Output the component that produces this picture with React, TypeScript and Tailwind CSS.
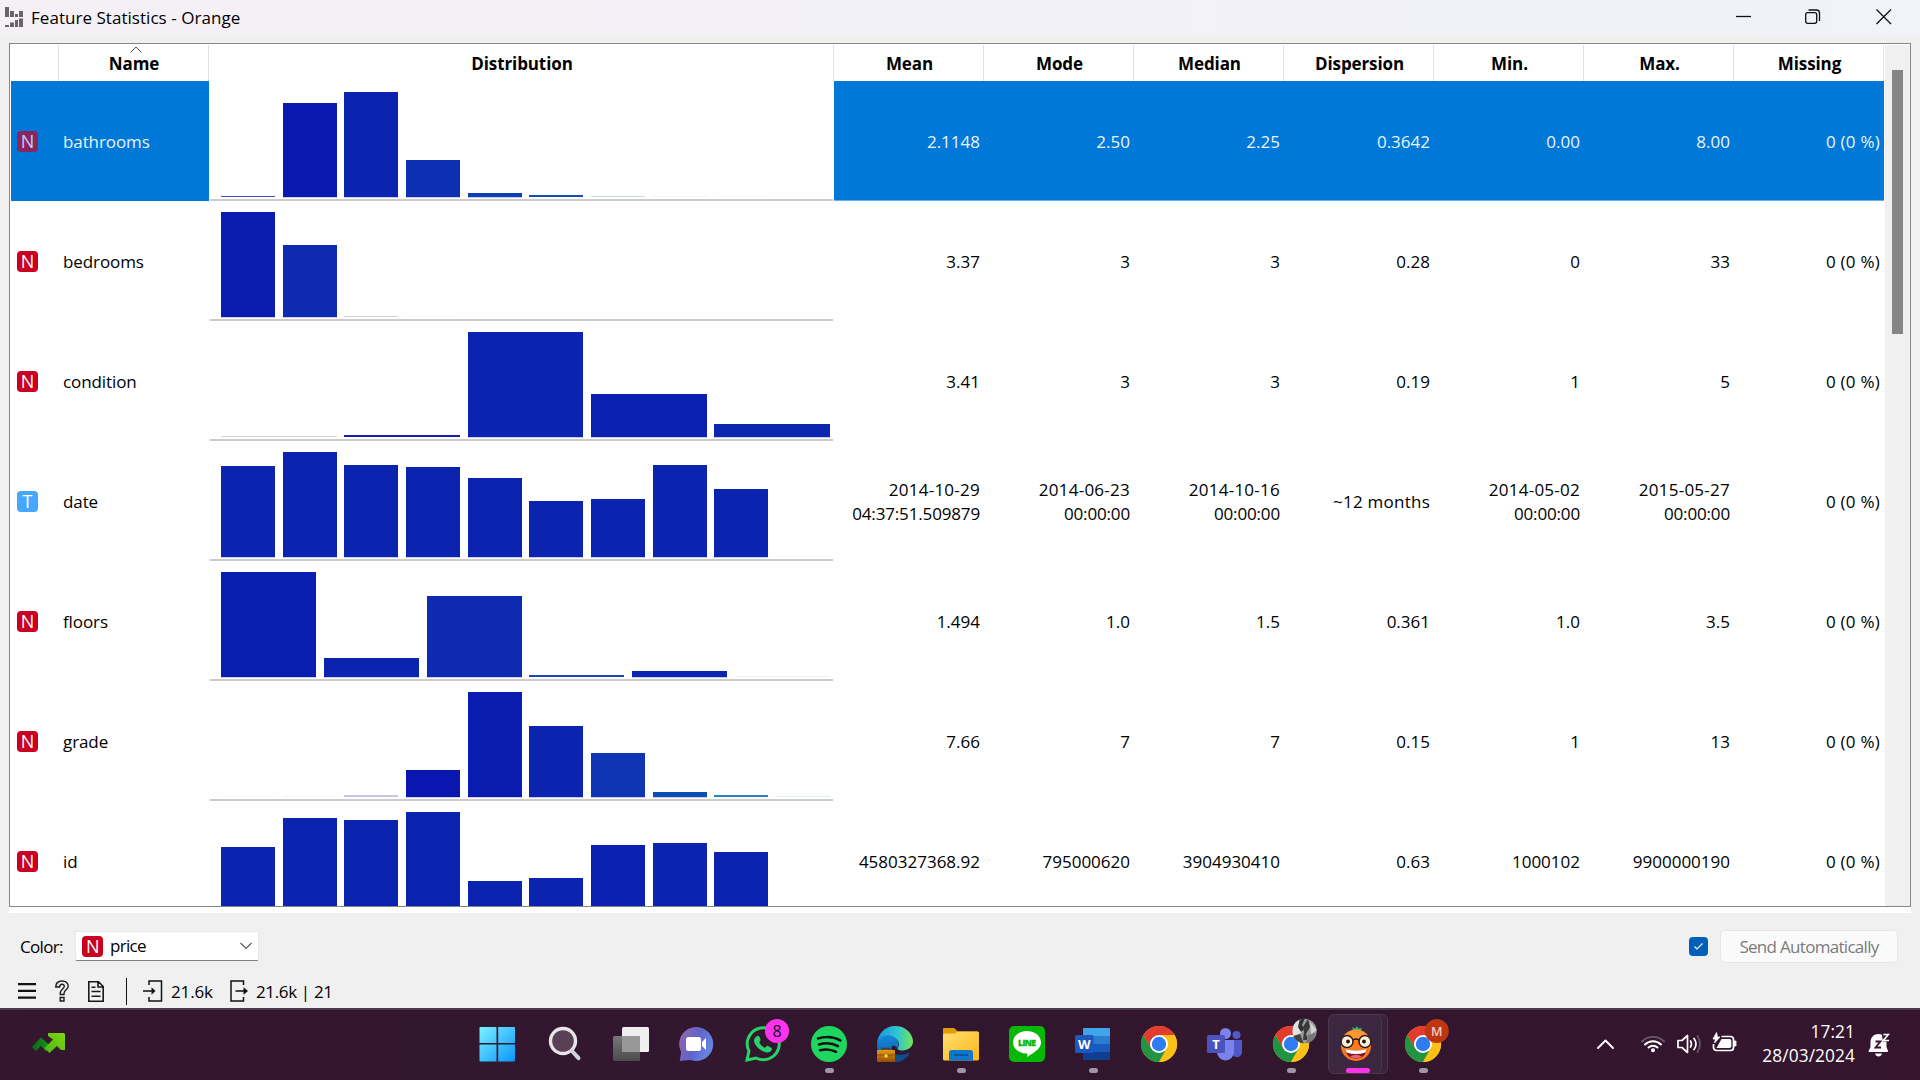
import type { ReactNode } from "react";

type Bar = { h: number; c?: string };
type Row = {
  name: string;
  kind: "N" | "T";
  slots: number;
  bars: Bar[];
  stats: string[];
};

const b = (h: number, c = "#0a24b0"): Bar => ({ h, c });

const rows: Row[] = [
  {
    name: "bathrooms", kind: "N", slots: 10,
    bars: [b(1.5, "#4646cc"), b(94, "#0a1ab0"), b(105), b(37, "#0d30b2"), b(4.5, "#0d40b5"), b(2.5, "#1750b0"), b(1, "#ccdae6"), b(1, "#f2f3f5"), b(1, "#fafafa"), b(0)],
    stats: ["2.1148", "2.50", "2.25", "0.3642", "0.00", "8.00", "0 (0 %)"],
  },
  {
    name: "bedrooms", kind: "N", slots: 10,
    bars: [b(105, "#0a1cb0"), b(72.5, "#0d2ab0"), b(1, "#cfd4ee"), b(1, "#fafafa")],
    stats: ["3.37", "3", "3", "0.28", "0", "33", "0 (0 %)"],
  },
  {
    name: "condition", kind: "N", slots: 5,
    bars: [b(1, "#ced2e8"), b(1.6, "#1520b0"), b(105), b(43, "#0b20b0"), b(13, "#0c26b0")],
    stats: ["3.41", "3", "3", "0.19", "1", "5", "0 (0 %)"],
  },
  {
    name: "date", kind: "T", slots: 10,
    bars: [b(91.5), b(105), b(92.5), b(90.5), b(79), b(56.5), b(58.5), b(92.5), b(68.5), b(1, "#f7f7fb")],
    stats: ["2014-10-29\n04:37:51.509879", "2014-06-23\n00:00:00", "2014-10-16\n00:00:00", "~12 months", "2014-05-02\n00:00:00", "2015-05-27\n00:00:00", "0 (0 %)"],
  },
  {
    name: "floors", kind: "N", slots: 6,
    bars: [b(105, "#0a1eb0"), b(19, "#0b24b0"), b(81.5, "#0d2ab0"), b(2, "#1f45b8"), b(6.5), b(1, "#eeeef8")],
    stats: ["1.494", "1.0", "1.5", "0.361", "1.0", "3.5", "0 (0 %)"],
  },
  {
    name: "grade", kind: "N", slots: 10,
    bars: [b(1, "#fafafa"), b(1, "#f5f5f8"), b(1.6, "#c6c6ea"), b(27, "#0a16b0"), b(105, "#0a1cb0"), b(71.5, "#0b24b0"), b(44.5, "#0f34b4"), b(5.2, "#0c4db6"), b(1.6, "#2e7ec2"), b(1, "#e0f2e4")],
    stats: ["7.66", "7", "7", "0.15", "1", "13", "0 (0 %)"],
  },
  {
    name: "id", kind: "N", slots: 10,
    bars: [b(70.5), b(99.5), b(97), b(105), b(36.5), b(39.5), b(72, "#0b20b0"), b(74), b(65)],
    stats: ["4580327368.92", "795000620", "3904930410", "0.63", "1000102", "9900000190", "0 (0 %)"],
  },
];

const headers = ["Mean", "Mode", "Median", "Dispersion", "Min.", "Max.", "Missing"];

function TypeIcon({ kind, selected }: { kind: "N" | "T"; selected?: boolean }) {
  const color = selected ? "bg-[#8b2560] text-[#b5d5f5]" : kind === "N" ? "bg-[#ca0020] text-white" : "bg-[#46a8fc] text-white";
  return (
    <span className={`flex size-[21px] shrink-0 items-center justify-center rounded-[4px] text-[18px] leading-none ${color}`}>{kind}</span>
  );
}

function Histogram({ row }: { row: Row }) {
  const cols = row.slots === 10 ? "grid-cols-10" : row.slots === 6 ? "grid-cols-6" : "grid-cols-5";
  return (
    <div className={`mr-px ml-px grid h-[120px] w-[623px] shrink-0 ${cols} items-end gap-x-[7.8px] border-b-2 border-[#cccccc] bg-white pr-[3px] pb-[2px] pl-[11px]`}>
      {row.bars.map((bar, i) => (
        <div
          key={i}
          className={bar.h > 4 ? "shadow-[0_1px_0_#c9cdec]" : ""}
          style={{ height: bar.h > 4 ? bar.h - 0.4 : bar.h, backgroundColor: bar.c }}
        />
      ))}
    </div>
  );
}

function statSpacing(s: string) {
  if (s.includes("(") || s.includes("~")) return "tracking-[0.25px]";
  if (s.includes("-")) return "";
  return "";
}

function DataRow({ row, selected }: { row: Row; selected: boolean }) {
  const sel = selected ? "bg-[#0078d7] text-[#e8f3fc]" : "bg-white";
  return (
    <div className="flex h-[120px] shrink-0">
      <div className={`flex w-[198px] shrink-0 items-center pl-[6px] ${sel}`}>
        <TypeIcon kind={row.kind} selected={selected} />
        <span className="ml-[25px] pt-[2px] tracking-[-0.1px]">{row.name}</span>
      </div>
      <Histogram row={row} />
      <div className={`flex ${sel} ${selected ? "border-b border-[#66aeea]" : ""}`}>
        {row.stats.map((s, i) => (
          <div key={i} className={`flex w-[150px] flex-col items-end justify-center pt-[2px] pr-1 leading-6 whitespace-nowrap ${statSpacing(s)}`}>
            {s.split("\n").map((line) => (
              <span key={line} className={line.includes("-") ? "tracking-[0.25px]" : line.includes(":") ? "tracking-[-0.15px]" : ""}>{line}</span>
            ))}
          </div>
        ))}
      </div>
    </div>
  );
}

function TitleBar() {
  return (
    <header className="flex h-[34px] shrink-0 items-center bg-linear-to-r from-[#f5f0f6] to-[#f0f3f9]">
      <svg className="ml-[5px] block" width="18" height="20" viewBox="0 0 18 20" fill="#666">
        <path d="M0 0h4v10H0zM5 4h4v6H5zM10 7h3v3h-3zM14 4h4v6h-4zM0 18h4v2H0zM5 15.500h4V20H5zM10 13h3v7h-3zM14 11.500h4V20h-4z" />
      </svg>
      <span className="ml-2 pt-[2px] text-[17px] tracking-[0.04px]">Feature Statistics - Orange</span>
      <div className="flex-1" />
      <svg width="184" height="34" viewBox="0 0 184 34" fill="none" stroke="#111" strokeWidth="1.3">
        <path d="M0 16.500h15" />
        <rect x="69.700" y="12.700" width="11" height="10.600" rx="2" />
        <path d="M72.500 10h8a3 3 0 0 1 3 3v8" />
        <path d="M140.500 9.500l14.500 14.500M155 9.500L140.500 24" />
      </svg>
    </header>
  );
}

function HeaderRow() {
  return (
    <div className="flex h-9 shrink-0 text-center text-[17px] leading-[38px] font-bold tracking-[-0.1px]">
      <div className="w-12 border-r border-[#e2e2e2]" />
      <div className="relative w-[150px] border-r border-[#e2e2e2] pl-px">
        <svg className="absolute top-[1px] left-[71px]" width="12" height="7" viewBox="0 0 12 7" fill="none" stroke="#555" strokeWidth="1"><path d="M.5 6.500L6 1l5.500 5.500" /></svg>
        Name
      </div>
      <div className="w-[625px] border-r border-[#e2e2e2] pl-0.5">Distribution</div>
      {headers.map((h) => (
        <div key={h} className="w-[150px] border-r border-[#e2e2e2] pl-0.5">{h}</div>
      ))}
    </div>
  );
}

function ControlArea() {
  return (
    <section className="h-[95px] shrink-0 text-[17px]">
      <div className="flex h-[66px] items-center pr-[22px] pl-[20px] tracking-[-0.7px]">
        <span className="w-[55px] pt-px">Color:</span>
        <div className="flex h-[30px] w-[184px] items-center rounded-[2px] border border-x-[#e8e8e8] border-t-[#e8e8e8] border-b-[#808080] bg-white pl-[6px]">
          <TypeIcon kind="N" />
          <span className="ml-[7px]">price</span>
          <svg className="mr-[6px] ml-auto" width="12" height="8" viewBox="0 0 12 8" fill="none" stroke="#555" strokeWidth="1.1"><path d="M.5 1L6 6.500 11.500 1" /></svg>
        </div>
        <div className="flex-1" />
        <div className="mr-3 flex size-[19px] items-center justify-center rounded-[4px] bg-[#005fb8]">
          <svg width="9" height="7" viewBox="0 0 9 7" fill="none" stroke="#fff" strokeWidth="1.100"><path d="M.5 3.500L3 6 8.500.5" /></svg>
        </div>
        <div className="flex h-[33px] w-[178px] items-center justify-center rounded-[4px] border border-[#e6e6e6] bg-[#fafafa] pt-px text-[#7b7b7b]">Send Automatically</div>
      </div>
      <div className="flex h-[24px] items-center pl-[18px]">
        <svg width="18" height="16" viewBox="0 0 18 16" fill="#111"><path d="M0 0h18v2.300H0zM0 6.800h18v2.300H0zM0 13.500h18v2.300H0z" /></svg>
        <svg className="ml-[19px]" width="14" height="22" viewBox="0 0 14 22" fill="none" stroke="#1a1a1a" strokeWidth="1.400">
          <path d="M.8 7C.8 3 3.500 1 7 1s6.200 2 6.200 5.200c0 3.200-4.200 4-4.200 7v1.300H5.300V13c0-3.500 4-4.300 4-6.700C9.300 5 8.500 4.200 7 4.200S4.700 5.200 4.700 7zM5.200 17.500H9V21H5.200z" />
        </svg>
        <svg className="ml-[19px]" width="16" height="21" viewBox="0 0 16 21" fill="none" stroke="#1a1a1a" strokeWidth="1.600">
          <path d="M.8.8h9.700l4.700 4.700v14.700H.8zM10 1v5h5M3.500 6.200h4M3.500 10.500h9M3.500 15.200h9" />
        </svg>
        <div className="ml-[22px] h-[27px] w-px bg-[#111]" />
        <svg className="ml-4" width="20" height="22" viewBox="0 0 20 22" fill="none" stroke="#111" strokeWidth="1.500">
          <path d="M6 5V1h12.500v20H6v-4M0 11h10" /><path d="M8.500 7.300L12.500 11l-4 3.700z" fill="#111" stroke="none" />
        </svg>
        <span className="ml-2 w-[59px] pt-px tracking-[-0.15px]">21.6k</span>
        <svg width="19" height="22" viewBox="0 0 19 22" fill="none" stroke="#111" strokeWidth="1.500">
          <path d="M13.500 5V1H1v20h12.500v-4M5.500 11h9" /><path d="M13.500 7.300l4.500 3.700-4.500 3.700z" fill="#111" stroke="none" />
        </svg>
        <span className="ml-[7px] pt-px tracking-[-0.35px]">21.6k | 21</span>
      </div>
    </section>
  );
}

function AppSlot({ children, running, active }: { children: ReactNode; running?: boolean; active?: boolean }) {
  return (
    <div className="relative flex h-full w-[66px] items-center justify-center">
      {active && <div className="absolute top-[6px] left-[30px] h-[60px] w-[34px] rounded-[6px] border border-[#4d394c] bg-[#38223a]" />}
      {active && <div className="absolute top-[6px] left-[4px] h-[60px] w-[54px] rounded-[6px] border border-[#4b374b] bg-[#3d2740]" />}
      <svg className="relative overflow-visible" width="36" height="36" viewBox="0 0 36 36">{children}</svg>
      {running && <div className="absolute bottom-[7px] left-[29px] h-[5px] w-[9px] rounded-full bg-[#a195a3]" />}
      {active && <div className="absolute bottom-[7px] left-[22px] h-[5px] w-6 rounded-full bg-[#ff33ee]" />}
    </div>
  );
}

function Chrome() {
  return (
    <g>
      <circle cx="18" cy="18" r="18" fill="#fbc116" />
      <path d="M2.400 9A18 18 0 0 1 33.600 9L18 9 10.200 22.500z" fill="#e33b2e" />
      <path d="M2.400 9A18 18 0 0 0 18 36L25.800 22.500 10.200 22.500z" fill="#229342" />
      <path d="M33.600 9A18 18 0 0 1 18 36L25.800 22.500 18 9z" fill="#fbc116" />
      <circle cx="18" cy="18" r="9" fill="#fff" />
      <circle cx="18" cy="18" r="7.200" fill="#2f7cf0" />
    </g>
  );
}

function Taskbar() {
  return (
    <footer className="flex h-[72px] shrink-0 items-center border-t-2 border-[#4b3a4c] bg-linear-to-r from-[#34162e] via-[#31172e] to-[#34152d] text-white">
      <div className="flex w-[466px] shrink-0 items-center pl-8">
        <svg className="-mt-1" width="33" height="20" viewBox="0 0 33 20">
          <defs>
            <linearGradient id="trend" x1="0" x2="1"><stop offset="0" stopColor="#0d6b12" /><stop offset="1" stopColor="#0f9a18" /></linearGradient>
            <linearGradient id="arrow" x1="0" y1="1" x2="1" y2="0"><stop offset="0" stopColor="#4cb51a" /><stop offset="1" stopColor="#7ed60c" /></linearGradient>
          </defs>
          <path d="M0 14L9 4.500l9 8-4 6-5-6-5 5.500z" fill="url(#trend)" />
          <path d="M16 0h15.500q1.500 0 1.500 1.500V17h-4l-4-4-7.500 7-5-5 8.500-8.500L16 3z" fill="url(#arrow)" />
        </svg>
      </div>
      <nav className="-mt-0.5 flex h-[72px] shrink-0">
        <AppSlot>
          <defs><linearGradient id="win" gradientUnits="userSpaceOnUse" x1="0" y1="0" x2="35" y2="35"><stop offset="0" stopColor="#7bf2ff" /><stop offset="1" stopColor="#0a96fb" /></linearGradient></defs>
          <g transform="translate(-1 0)"><path d="M0.500 .9h15a1 1 0 0 1 1 1v15h-17v-15a1 1 0 0 1 1-1zM18.200 .9h15.800a1 1 0 0 1 1 1v15h-16.800zM-.5 18.600h17v17h-16a1 1 0 0 1-1-1zM18.200 18.600H35v16a1 1 0 0 1-1 1H18.200z" fill="url(#win)" /></g>
        </AppSlot>
        <AppSlot>
          <g transform="translate(1 0)">
            <circle cx="15" cy="15" r="12.500" fill="#594055" stroke="#e6e6ea" strokeWidth="3.400" />
            <path d="M24 25l6.500 7.200" stroke="#cfd3da" strokeWidth="4" strokeLinecap="round" />
          </g>
        </AppSlot>
        <AppSlot>
          <defs><linearGradient id="tv" x1="0" x2="0" y1="0" y2="1"><stop offset="0" stopColor="#777" /><stop offset="1" stopColor="#4c4c4c" /></linearGradient></defs>
          <rect x="9" y="1" width="27" height="25" rx="1.500" fill="#efeff0" />
          <rect x="0" y="10" width="27" height="25" rx="1.500" fill="url(#tv)" />
          <path d="M9 10h18v16H9z" fill="#989898" />
        </AppSlot>
        <AppSlot>
          <defs><linearGradient id="chat" x1="0" y1="0.200" x2="1" y2="0.600"><stop offset="0" stopColor="#9068ac" /><stop offset=".5" stopColor="#6263cb" /><stop offset="1" stopColor="#658be4" /></linearGradient></defs>
          <path d="M17.500 1a17 17 0 1 1-6 33L.7 35l1.500-9A17 17 0 0 1 17.500 1z" fill="url(#chat)" />
          <rect x="7" y="11" width="15" height="14" rx="2.500" fill="#fff" />
          <path d="M23 16l4-4v12l-4-4z" fill="#fff" />
        </AppSlot>
        <AppSlot>
          <path d="M2 34l2-9A16 16 0 1 1 11 32z" fill="none" stroke="#25d366" strokeWidth="3" />
          <path d="M11.500 10.500c2-2 3 0 4 3 .4 1-1.500 2.500-1 3.200 1.400 2.700 3 4 5.200 5 .8.3 2-2.200 3-1.800 3.800 1.700 5 2 3.800 4.300-1.500 2.600-4.500 2.800-8.500 1C13 23 9.500 18.500 9 15c-.2-2 1-3.300 2.500-4.500z" fill="#25d366" />
          <circle cx="32" cy="5" r="12" fill="#ff33ee" />
          <text x="32" y="10.500" textAnchor="middle" fontSize="16" fill="#111">8</text>
        </AppSlot>
        <AppSlot running>
          <circle cx="18" cy="18" r="18" fill="#1fd760" />
          <path d="M7 12.500c8-2.500 16-1.700 22.500 2M8 18.500c7-2 13.500-1.300 19 1.700M9 24.200c6-1.500 11-1 16 1.600" fill="none" stroke="#111" strokeWidth="2.500" strokeLinecap="round" />
        </AppSlot>
        <AppSlot>
          <defs>
            <linearGradient id="edgeTop" x1="0" x2="1"><stop offset="0" stopColor="#1b91e0" /><stop offset=".55" stopColor="#2cc5d4" /><stop offset="1" stopColor="#73e458" /></linearGradient>
            <linearGradient id="edgeMid" x1="0" y1="0" x2="0" y2="1"><stop offset="0" stopColor="#1687d4" /><stop offset="1" stopColor="#0960b0" /></linearGradient>
            <linearGradient id="bag" x1="0" y1="0" x2="0" y2="1"><stop offset="0" stopColor="#e79a12" /><stop offset="1" stopColor="#8f4d05" /></linearGradient>
          </defs>
          <path d="M0 19C0 8 8 0 18 0c11 0 18 8 18 15.500C36 21 31 24.500 25.500 24.500c-4 0-5-1.300-5-2.300 2-2 3-8-4-11C10 8.500 2 12 0 19z" fill="url(#edgeTop)" />
          <path d="M0 20C1 10 12 6 18.500 12 23 16 21 21 20.500 22.200 17 18 14 19 14.500 24c.5 5 5 10 10 11C13 38 0 34 0 20z" fill="url(#edgeMid)" />
          <path d="M14.500 22c0 7 9 9 18.500 4.500C31 32 24 36.500 18 36z" fill="#104d8c" />
          <path d="M5.500 25v-2.500h7V25" fill="none" stroke="#5f3404" strokeWidth="1.500" />
          <rect x="0" y="24" width="18" height="12" rx="1" fill="url(#bag)" /><path d="M0 29h18" stroke="#8b4b05" /><rect x="7.500" y="28.500" width="3" height="3" fill="#ffd94a" />
        </AppSlot>
        <AppSlot running>
          <defs><linearGradient id="fold" x1="0" y1="0" x2="1" y2="1"><stop offset="0" stopColor="#ffdf72" /><stop offset="1" stopColor="#f9b716" /></linearGradient></defs>
          <path d="M0 3q0-1 1-1h10l4 3.500H35V12H0z" fill="#e09b08" />
          <path d="M0 9q0-1.500 1.500-1.500h10L15 5.500h19.500q1.500 0 1.500 1.500v26q0 1.500-1.500 1.500h-33Q0 34.500 0 33z" fill="url(#fold)" />
          <path d="M6 34.500V27q0-3 3-3h18q3 0 3 3v7.500z" fill="#0f77cb" /><path d="M11 29h14" stroke="#074c86" strokeWidth="1.500" />
        </AppSlot>
        <AppSlot>
          <rect width="36" height="36" rx="5" fill="#06b806" />
          <path d="M18 5c8 0 14 5 14 11.500 0 5-4 8.500-14 14.500 .5-2 .5-3.500-.5-3.500C9.500 27 4 22.500 4 16.500 4 10 10 5 18 5z" fill="#fff" />
          <text x="18" y="19.500" textAnchor="middle" fontSize="8.500" fontWeight="800" fill="#06b806" stroke="#06b806" strokeWidth=".3" textLength="18">LINE</text>
        </AppSlot>
        <AppSlot running>
          <path d="M8 3q0-1 1-1h25q1 0 1 1v7H8z" fill="#41a5ee" /><path d="M8 10h27v8H8z" fill="#2b7cd3" /><path d="M8 18h27v8H8z" fill="#185abd" /><path d="M8 26h27v7q0 1-1 1H9q-1 0-1-1z" fill="#103f91" />
          <rect x="0" y="9" width="18.500" height="18" rx="1.500" fill="#1d59bd" />
          <text x="9.200" y="22.500" textAnchor="middle" fontSize="13" fontWeight="700" fill="#fff">W</text>
        </AppSlot>
        <AppSlot><Chrome /></AppSlot>
        <AppSlot>
          <circle cx="18.500" cy="7.500" r="5.500" fill="#7b83eb" /><circle cx="29.500" cy="9" r="4" fill="#5059c9" />
          <path d="M24 14h11v11a5 5 0 0 1-10 2z" fill="#4f58c7" />
          <path d="M10 14h17v12a8.500 8.500 0 0 1-17 0z" fill="#7b83eb" />
          <rect x="0" y="9" width="18" height="18" rx="1.500" fill="#4b53bc" />
          <text x="9" y="22.500" textAnchor="middle" fontSize="13" fontWeight="700" fill="#fff">T</text>
        </AppSlot>
        <AppSlot running>
          <Chrome />
          <clipPath id="ava"><circle cx="31.500" cy="5" r="12.200" /></clipPath>
          <g clipPath="url(#ava)">
            <path d="M19-8h26v26H19z" fill="#9a9a97" />
            <path d="M19-8h10l-3 9 3 5-9 6z" fill="#e2e2e0" />
            <path d="M27-8h5l-3 7 2 4-3 3-3-5z" fill="#333" />
            <path d="M35-7l2 8-4 7 2 6h-5l1-8-1-5z" fill="#3a3a3a" />
            <path d="M37-4l7 8-6 4z" fill="#d2d2cf" />
            <path d="M20 10l7-2 4 10H20z" fill="#444" />
            <path d="M35 9l8-2-4 10h-6z" fill="#777" />
          </g>
        </AppSlot>
        <AppSlot active>
          <g transform="translate(-1 0)">
            <path d="M14 1l3 1.500 2-2.500 1.500 2.500 3.500-.5-1.500 4h-7z" fill="#2db67c" />
            <ellipse cx="18" cy="20" rx="15" ry="15" fill="#ff7a1c" />
            <path d="M5 11a15 15 0 0 1 26 0l-13 4z" fill="#ff962f" />
            <path d="M7.500 23q10.500 3 21 0c0 6-5 9.800-10.500 9.800S7.500 29 7.500 23z" fill="#7e1723" /><path d="M7.500 23q10.500 3 21 0l-1 3.500q-9.500 3-19 0z" fill="#fff" /><path d="M12 30.500q6-3.500 12 0-6 4-12 0z" fill="#e8627a" />
            <circle cx="9" cy="15.500" r="6" fill="#fff0dc" stroke="#2b1c18" strokeWidth="1.500" /><circle cx="27" cy="15.500" r="6" fill="#fff0dc" stroke="#2b1c18" strokeWidth="1.500" />
            <path d="M15 14q3-2 6 0" stroke="#2b1c18" strokeWidth="1.600" fill="none" />
            <circle cx="10" cy="15.500" r="1.900" fill="#221613" /><circle cx="26" cy="15.500" r="1.900" fill="#221613" />
          </g>
        </AppSlot>
        <AppSlot running>
          <Chrome />
          <circle cx="31.800" cy="5" r="12" fill="#bf3510" />
          <text x="31.800" y="9.500" textAnchor="middle" fontSize="12.500" fontWeight="600" fill="#f0cfc4">M</text>
        </AppSlot>
      </nav>
      <div className="flex-1" />
      <div className="flex items-center">
        <svg className="-mt-0.5" width="17" height="10" viewBox="0 0 17 10" fill="none" stroke="#fff" strokeWidth="1.900" strokeLinecap="round" strokeLinejoin="round"><path d="M1 9l7.500-7.500L16 9" /></svg>
        <svg className="-mt-1 ml-[27px]" width="24" height="20" viewBox="0 0 24 20" fill="none" strokeWidth="1.900" strokeLinecap="round">
          <path d="M1 8.500a15.500 15.500 0 0 1 22 0" stroke="#6c566a" /><path d="M4 11.500a11.300 11.300 0 0 1 16 0M7.500 14.500a6.500 6.500 0 0 1 9 0" stroke="#fff" /><circle cx="12" cy="17.200" r="2" fill="#fff" />
        </svg>
        <svg className="-mt-0.5 ml-3" width="25" height="20" viewBox="0 0 25 20" fill="none" stroke="#fff" strokeWidth="1.700" strokeLinecap="round" strokeLinejoin="round">
          <path d="M1 6.500h4L10.500 1.500v17L5 13.500H1zM13.500 7q2 3 0 6M17 4.500q4 5.500 0 11" /><path d="M20.500 2q5 8 0 16" stroke="#6c566a" />
        </svg>
        <svg className="-mt-1.5 ml-[10px]" width="25" height="20" viewBox="0 0 25 20" fill="none" stroke="#fff" strokeWidth="1.700" strokeLinejoin="round">
          <path d="M9.500 4.500h9a3 3 0 0 1 3 3v8a3 3 0 0 1-3 3h-14a3 3 0 0 1-3-3V12" /><path d="M9.500 7h8a1.800 1.800 0 0 1 1.800 1.800v5.500a1.800 1.800 0 0 1-1.800 1.800H4.500z" fill="#fff" stroke="none" /><path d="M22 9h2v5h-2zM4.500.5L1 7h2.500L2.500 11 8 5H5.500z" fill="#fff" strokeWidth=".8" />
        </svg>
        <div className="-mt-0.5 ml-[21px] w-[97px] text-right text-[17.300px] leading-6 tracking-[0.1px]">
          <div>17:21</div>
          <div>28/03/2024</div>
        </div>
        <svg className="mr-[30px] ml-[13px]" width="22" height="24" viewBox="0 0 22 24">
          <path d="M2.500 9.500C2.500 4 6 1 10.500 1S18.500 4 18.500 9.500V14l1.500 4q.3 1-1 1H1.500q-1.200 0-.9-1l1.900-4zM7 20.500h7q-1 3-3.500 3T7 20.500z" fill="#fff" />
          <path d="M7.500 8.500h5l-5 6h5.500" stroke="#33152d" strokeWidth="1.800" fill="none" /><path d="M13.500-.5h8.500v9h-7z" fill="#33152d" /><path d="M15.300 1.500h5l-5 6H21" stroke="#fff" strokeWidth="1.600" fill="none" />
        </svg>
      </div>
    </footer>
  );
}

export default function App() {
  return (
    <main className="flex h-[1080px] w-[1920px] flex-col overflow-hidden bg-[#f0f0f0] font-['Open_Sans',sans-serif] text-black">
      <TitleBar />
      <div className="mt-[9px] mr-[9px] ml-[9px] h-[870px] shrink-0 bg-white">
        <div className="flex h-[864px] overflow-hidden border border-[#828790] pt-px pl-px text-[17px]">
          <div className="flex w-[1873px] shrink-0 flex-col overflow-hidden">
            <HeaderRow />
            {rows.map((row, i) => (
              <DataRow key={row.name} row={row} selected={i === 0} />
            ))}
          </div>
          <div className="ml-px flex-1 bg-[#f0f0f0] pt-[25px] pl-[7px]">
            <div className="h-[264px] w-[11px] bg-[#858585]" />
          </div>
        </div>
      </div>
      <ControlArea />
      <Taskbar />
    </main>
  );
}
